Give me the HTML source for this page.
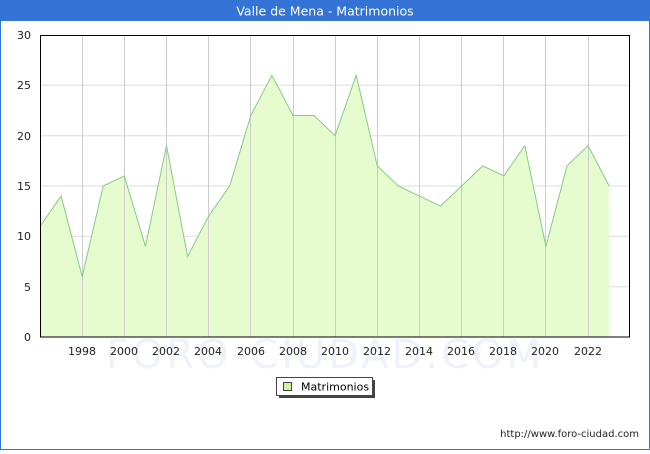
<!DOCTYPE html>
<html><head><meta charset="utf-8"><style>
body{margin:0;width:650px;height:450px;overflow:hidden;background:#fff;font-family:"DejaVu Sans","Liberation Sans",sans-serif}
</style></head><body>
<svg width="650" height="450" xmlns="http://www.w3.org/2000/svg" font-family="DejaVu Sans, Liberation Sans, sans-serif">
<rect x="0" y="0" width="650" height="450" fill="#fff"/>
<rect x="0.5" y="0.5" width="649" height="449" fill="none" stroke="#3373d6"/>
<rect x="0" y="0" width="650" height="21" fill="#3373d6"/>
<text x="325" y="15.5" fill="#fff" font-size="12.5" text-anchor="middle">Valle de Mena - Matrimonios</text>
<text x="325" y="368" fill="#f0f2fb" font-size="40" text-anchor="middle" letter-spacing="3">FORO-CIUDAD.COM</text>
<g stroke="#ddd" stroke-width="1">
<line x1="40" y1="286.7" x2="630" y2="286.7"/><line x1="40" y1="236.3" x2="630" y2="236.3"/><line x1="40" y1="186" x2="630" y2="186"/><line x1="40" y1="135.7" x2="630" y2="135.7"/><line x1="40" y1="85.3" x2="630" y2="85.3"/>
</g>
<polygon fill="#e6fccf" points="40,337 40,226.3 61.1,196.1 82.2,276.6 103.2,186 124.3,175.9 145.4,246.4 166.5,145.7 187.6,256.5 208.6,216.2 229.7,186 250.8,115.5 271.9,75.3 293,115.5 314,115.5 335.1,135.7 356.2,75.3 377.3,165.9 398.4,186 419.4,196.1 440.5,206.1 461.6,186 482.7,165.9 503.8,175.9 524.8,145.7 545.9,246.4 567,165.9 588.1,145.7 609.2,186 609.2,337"/>
<g stroke="#ccc" stroke-width="1">
<line x1="82.5" y1="35" x2="82.5" y2="337"/><line x1="124.5" y1="35" x2="124.5" y2="337"/><line x1="166.5" y1="35" x2="166.5" y2="337"/><line x1="208.5" y1="35" x2="208.5" y2="337"/><line x1="250.5" y1="35" x2="250.5" y2="337"/><line x1="293.5" y1="35" x2="293.5" y2="337"/><line x1="335.5" y1="35" x2="335.5" y2="337"/><line x1="377.5" y1="35" x2="377.5" y2="337"/><line x1="419.5" y1="35" x2="419.5" y2="337"/><line x1="461.5" y1="35" x2="461.5" y2="337"/><line x1="503.5" y1="35" x2="503.5" y2="337"/><line x1="545.5" y1="35" x2="545.5" y2="337"/><line x1="588.5" y1="35" x2="588.5" y2="337"/>
</g>
<polyline fill="none" stroke="#88c888" stroke-width="1" points="40,226.3 61.1,196.1 82.2,276.6 103.2,186 124.3,175.9 145.4,246.4 166.5,145.7 187.6,256.5 208.6,216.2 229.7,186 250.8,115.5 271.9,75.3 293,115.5 314,115.5 335.1,135.7 356.2,75.3 377.3,165.9 398.4,186 419.4,196.1 440.5,206.1 461.6,186 482.7,165.9 503.8,175.9 524.8,145.7 545.9,246.4 567,165.9 588.1,145.7 609.2,186"/>
<rect x="40.5" y="35.5" width="589" height="301.5" fill="none" stroke="#000"/>
<g font-size="11" fill="#222" text-anchor="end">
<text x="31" y="341">0</text><text x="31" y="291">5</text><text x="31" y="240">10</text><text x="31" y="190">15</text><text x="31" y="140">20</text><text x="31" y="89">25</text><text x="31" y="39">30</text>
</g>
<g font-size="11" fill="#222" text-anchor="middle">
<text x="82" y="355">1998</text><text x="124" y="355">2000</text><text x="166" y="355">2002</text><text x="208" y="355">2004</text><text x="251" y="355">2006</text><text x="293" y="355">2008</text><text x="335" y="355">2010</text><text x="377" y="355">2012</text><text x="419" y="355">2014</text><text x="461" y="355">2016</text><text x="503" y="355">2018</text><text x="545" y="355">2020</text><text x="588" y="355">2022</text>
</g>
<rect x="279" y="380" width="96" height="18" fill="#444"/>
<rect x="276.5" y="377.5" width="96" height="18" fill="#fff" stroke="#444"/>
<rect x="283.5" y="382.5" width="8" height="8" fill="#ccf5a0" stroke="#444"/>
<text x="301" y="390.5" font-size="11" fill="#000">Matrimonios</text>
<text x="639" y="437" font-size="10" fill="#222" text-anchor="end">http://www.foro-ciudad.com</text>
</svg>
</body></html>
